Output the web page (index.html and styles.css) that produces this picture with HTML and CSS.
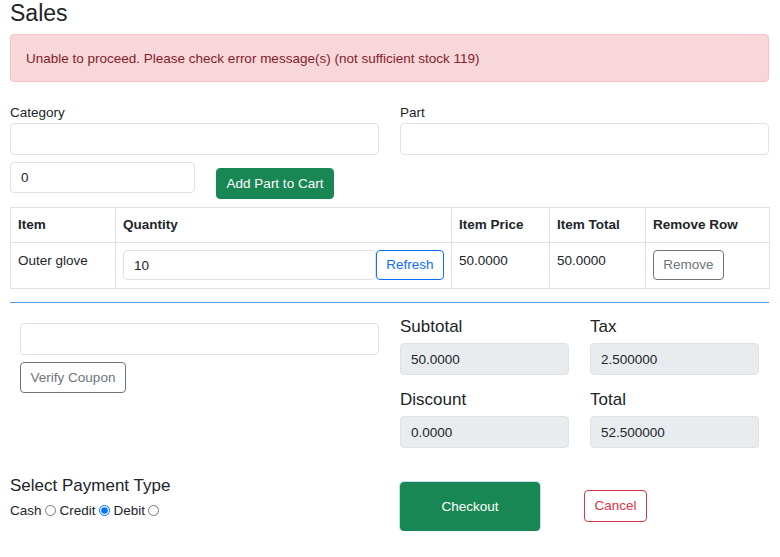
FILE: index.html
```html
<!DOCTYPE html>
<html lang="en">
<head>
<meta charset="utf-8">
<title>Sales</title>
<link rel="stylesheet" href="styles.css">
</head>
<body>
<div class="page">
  <h1 class="title">Sales</h1>
  <div class="alert">Unable to proceed. Please check error message(s) (not sufficient stock 119)</div>

  <div class="two-col">
    <div class="field">
      <label class="lbl">Category</label>
      <input class="input" type="text">
    </div>
    <div class="field">
      <label class="lbl">Part</label>
      <input class="input" type="text">
    </div>
  </div>

  <div class="qty-row">
    <input class="input qty" type="text" value="0">
    <button class="btn btn-green add-btn">Add Part to Cart</button>
  </div>

  <table class="cart">
    <colgroup>
      <col class="c-item"><col class="c-qty"><col class="c-price"><col class="c-total"><col class="c-remove">
    </colgroup>
    <thead>
      <tr><th>Item</th><th>Quantity</th><th>Item Price</th><th>Item Total</th><th>Remove Row</th></tr>
    </thead>
    <tbody>
      <tr>
        <td>Outer glove</td>
        <td>
          <div class="qty-cell">
            <input class="input cell-input" type="text" value="10">
            <button class="btn btn-outline-blue cell-btn">Refresh</button>
          </div>
        </td>
        <td>50.0000</td>
        <td>50.0000</td>
        <td><button class="btn btn-outline-gray cell-btn">Remove</button></td>
      </tr>
    </tbody>
  </table>

  <div class="divider"></div>

  <div class="two-col summary">
    <div class="coupon">
      <input class="input" type="text">
      <button class="btn btn-outline-gray verify-btn">Verify Coupon</button>
    </div>
    <div class="totals">
      <div class="tot-field">
        <div class="h5">Subtotal</div>
        <input class="input readonly" type="text" value="50.0000" readonly>
      </div>
      <div class="tot-field">
        <div class="h5">Tax</div>
        <input class="input readonly" type="text" value="2.500000" readonly>
      </div>
      <div class="tot-field">
        <div class="h5">Discount</div>
        <input class="input readonly" type="text" value="0.0000" readonly>
      </div>
      <div class="tot-field">
        <div class="h5">Total</div>
        <input class="input readonly" type="text" value="52.500000" readonly>
      </div>
    </div>
  </div>

  <div class="two-col payment">
    <div class="pay-type">
      <div class="h5">Select Payment Type</div>
      <div class="radios">
        <label class="radio-lbl">Cash <input type="radio" name="pay"></label>
        <label class="radio-lbl">Credit <input type="radio" name="pay" checked></label>
        <label class="radio-lbl">Debit <input type="radio" name="pay"></label>
      </div>
    </div>
    <div class="actions">
      <button class="btn btn-green checkout">Checkout</button>
      <button class="btn btn-outline-red cancel">Cancel</button>
    </div>
  </div>
</div>
</body>
</html>
```

FILE: styles.css
```css
* { box-sizing: border-box; }
html, body { margin: 0; padding: 0; background: #fff; }
body {
  font-family: "Liberation Sans", Arial, sans-serif;
  font-size: 13.5px;
  line-height: 21px;
  color: #212529;
}
.page { padding: 0 11px 0 10px; }
.title {
  margin: 0 0 8px;
  font-size: 23px;
  line-height: 26px;
  font-weight: 400;
}
.alert {
  height: 48px;
  padding: 13px 15px;
  background: #f8d7da;
  border: 1px solid #f5c2c7;
  border-radius: 4px;
  color: #842029;
  margin-bottom: 20px;
}
.two-col {
  display: grid;
  grid-template-columns: 369px 369px;
  column-gap: 21px;
}
.lbl { display: block; line-height: 21px; }
.input {
  display: block;
  width: 100%;
  height: 32px;
  padding: 0 10px;
  border: 1px solid #dee2e6;
  border-radius: 4px;
  font-family: inherit;
  font-size: 13.5px;
  color: #212529;
  background: #fff;
  outline: none;
}
.qty-row {
  display: flex;
  align-items: flex-start;
  gap: 21px;
  margin-top: 7px;
}
.qty { width: 185px; height: 31px; }
.btn {
  font-family: inherit;
  font-size: 13.5px;
  line-height: 1;
  border-radius: 4px;
  padding: 0 10px;
  cursor: pointer;
  background: #fff;
}
.btn-green { background: #198754; border: 1px solid #198754; color: #fff; }
.btn-outline-blue { border: 1px solid #0d6efd; color: #0d6efd; }
.btn-outline-gray { border: 1px solid #6c757d; color: #6c757d; }
.btn-outline-red { border: 1px solid #dc3545; color: #dc3545; }
.add-btn { height: 31px; width: 118px; padding: 0; margin-top: 6px; }

.cart {
  width: 759px;
  margin-top: 8px;
  border-collapse: collapse;
  table-layout: fixed;
}
.c-item { width: 105px; }
.c-qty { width: 336px; }
.c-price { width: 98px; }
.c-total { width: 96px; }
.c-remove { width: 124px; }
.cart th, .cart td {
  border: 1px solid #dee2e6;
  text-align: left;
  vertical-align: top;
  padding: 7px;
}
.cart th { font-weight: 700; padding: 6px 7px 7px; }
.cart td { padding: 7px 7px 8px 7px; }
.qty-cell { display: flex; }
.cell-input { flex: 1; height: 30px; }
.cell-btn { height: 30px; padding: 0 10px; }
.qty-cell .cell-btn { width: 68px; padding: 0; }
.cart td:last-child .cell-btn { width: 71px; padding: 0; }

.divider {
  margin-top: 13px;
  height: 1px;
  background: #4f9cf5;
}
.coupon { padding: 20px 0 0 10px; }
.verify-btn { display: block; height: 31px; width: 106px; padding: 0; margin-top: 7px; }
.totals {
  display: grid;
  grid-template-columns: 169px 169px;
  column-gap: 21px;
  padding-top: 13px;
}
.h5 { font-size: 17px; line-height: 21px; margin-bottom: 6px; }
.tot-field .input { margin-bottom: 14px; }
.readonly { background: #e9ecef; height: 32px; }
.payment { margin-top: 12px; }
.pay-type { padding-top: 1px; }
.payment .h5 { margin-bottom: 4px; }
.radios { display: flex; align-items: center; }
.radio-lbl { display: inline-flex; align-items: center; }
.radio-lbl input { width: 11px; height: 11px; margin: 0 4px 0 3px; }
.actions { display: flex; align-items: flex-start; }
.checkout {
  width: 140px;
  height: 49px;
  margin-top: 8px;
  box-shadow: 0 0 0 1px rgba(13, 110, 253, 0.25);
}
.cancel { width: 63px; height: 32px; padding: 0; margin: 16px 0 0 44px; }
```
